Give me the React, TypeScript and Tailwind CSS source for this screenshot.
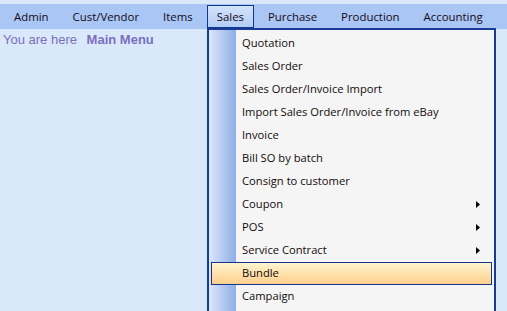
const topMenu = ["Admin", "Cust/Vendor", "Items", "Sales", "Purchase", "Production", "Accounting"]

type Item = { label: string, sub?: boolean, active?: boolean }

const salesMenu: Item[] = [
    { label: "Quotation" },
    { label: "Sales Order" },
    { label: "Sales Order/Invoice Import" },
    { label: "Import Sales Order/Invoice from eBay" },
    { label: "Invoice" },
    { label: "Bill SO by batch" },
    { label: "Consign to customer" },
    { label: "Coupon", sub: true },
    { label: "POS", sub: true },
    { label: "Service Contract", sub: true },
    { label: "Bundle", active: true },
    { label: "Campaign" },
]

function Arrow() {
    return <svg width="4" height="7" viewBox="0 0 4 7" className="mr-[14px] shrink-0">
        <path d="M0 0 L4 3.5 L0 7 Z" fill="#000" />
    </svg>
}

function Row(props: Item) {
    return <div className="relative h-[23px] flex items-center justify-between">
        {
            props.active
                ? <div className="absolute left-[-25px] right-[2px] top-0 h-[23px] border border-[#15368f] bg-gradient-to-b from-[#fff4cf] to-[#ffcf8c]" />
                : ''
        }
        <span className="relative pl-[6px] text-[#140a0c]">{props.label}</span>
        {props.sub ? <Arrow /> : ''}
    </div>
}

export default function App() {
    return <div className="relative w-[507px] h-[311px] overflow-hidden bg-[#dae8fc] font-['Open_Sans',sans-serif] text-[11.2px]">
        <div className="h-[4px] bg-[#dae8fc]" />
        <nav className="h-[25px] bg-[#a9c6f5] flex items-center pl-[2px] text-[11.4px]">
            {
                topMenu.map(m => m === "Sales"
                    ? <div key={m} className="mx-[2px] h-[23px] px-[9px] flex items-center border border-[#0d3a8e] bg-gradient-to-b from-[#d3e2fa] to-[#b3cdf5] text-[#140a14]">{m}</div>
                    : <div key={m} className="px-[12px] text-[#140a14]">{m}</div>)
            }
        </nav>
        <div className="pl-[3px] pt-[1px] font-['Liberation_Sans',Arial,sans-serif] text-[13px] text-[#7a6fbd]">
            You are here <span className="ml-[6px] font-bold">Main Menu</span>
        </div>

        <div className="absolute left-[207px] top-[28px] w-[289px] h-[300px] border-2 border-[#1a3a98] bg-[#f5f5f5] flex">
            <div className="w-[27px] shrink-0 bg-gradient-to-r from-[#dbe7fb] to-[#8eaee6]" />
            <div className="flex-1 flex flex-col pt-[2px]">
                {salesMenu.map(i => <Row key={i.label} {...i} />)}
            </div>
        </div>
    </div>
}
